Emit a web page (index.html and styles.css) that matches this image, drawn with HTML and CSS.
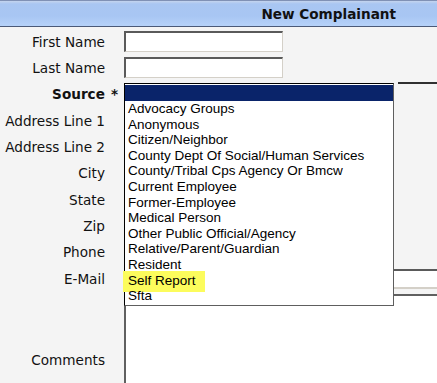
FILE: index.html
```html
<!DOCTYPE html>
<html lang="en">
<head>
    <meta charset="UTF-8">
    <title>New Complainant</title>
    <link rel="stylesheet" href="styles.css">
</head>
<body>
<div class="panel">

    <!-- 标题栏 -->
    <div class="panel-header">New Complainant</div>

    <div class="form">
        <div class="row row-first">
            <label class="label">First Name</label>
            <div class="field"><input type="text" class="text-input"></div>
        </div>
        <div class="row row-first">
            <label class="label">Last Name</label>
            <div class="field"><input type="text" class="text-input"></div>
        </div>

        <!-- 下拉列表 (已展开) -->
        <div class="row row-source">
            <label class="label label-bold">Source<span class="req">*</span></label>
            <div class="field field-source">
                <div class="select-closed"></div>
                <div class="dropdown">
                    <div class="option option-selected"></div>
                    <div class="option">Advocacy Groups</div>
                    <div class="option">Anonymous</div>
                    <div class="option">Citizen/Neighbor</div>
                    <div class="option">County Dept Of Social/Human Services</div>
                    <div class="option">County/Tribal Cps Agency Or Bmcw</div>
                    <div class="option">Current Employee</div>
                    <div class="option">Former-Employee</div>
                    <div class="option">Medical Person</div>
                    <div class="option">Other Public Official/Agency</div>
                    <div class="option">Relative/Parent/Guardian</div>
                    <div class="option">Resident</div>
                    <div class="option"><span class="mark">Self Report</span></div>
                    <div class="option">Sfta</div>
                </div>
            </div>
        </div>

        <div class="row">
            <label class="label">Address Line 1</label>
            <div class="field"><input type="text" class="text-input"></div>
        </div>
        <div class="row">
            <label class="label">Address Line 2</label>
            <div class="field"><input type="text" class="text-input"></div>
        </div>
        <div class="row">
            <label class="label">City</label>
            <div class="field"><input type="text" class="text-input"></div>
        </div>
        <div class="row">
            <label class="label">State</label>
            <div class="field"><input type="text" class="text-input"></div>
        </div>
        <div class="row">
            <label class="label">Zip</label>
            <div class="field"><input type="text" class="text-input"></div>
        </div>
        <div class="row">
            <label class="label">Phone</label>
            <div class="field"><input type="text" class="text-input"></div>
        </div>
        <div class="row">
            <label class="label">E-Mail</label>
            <div class="field"><input type="text" class="text-input text-wide"></div>
        </div>

        <div class="row row-comments">
            <label class="label">Comments</label>
            <div class="field"><textarea class="comments"></textarea></div>
        </div>
    </div>
</div>
</body>
</html>
```

FILE: styles.css
```css
html, body {
    margin: 0;
    padding: 0;
    overflow: hidden;
    background-color: #f4f4f4;
}

.panel {
    width: 437px;
    height: 383px;
    overflow: hidden;
    font-family: "DejaVu Sans", Verdana, sans-serif;
    font-size: 13.6px;
    color: #111;
}

.panel-header {
    height: 25px;
    line-height: 26px;
    padding-right: 41px;
    text-align: right;
    font-weight: bold;
    color: #111;
    border-top: 1px solid #8091b5;
    border-bottom: 1px solid #4b5a78;
    background: linear-gradient(#c4d4ee 0, #a9c6f2 3px, #a8c6f3 60%, #b6d2f9 100%);
}

.form {
    padding-top: 1.5px;
}

.row {
    display: flex;
    align-items: center;
    height: 26.33px;
}

.row-first {
    height: 26px;
}

.row-source {
    height: 27px;
    align-items: flex-start;
}

.label {
    width: 105px;
    flex-shrink: 0;
    text-align: right;
    white-space: nowrap;
}

.row-source .label {
    line-height: 27px;
}

.label-bold {
    font-weight: bold;
}

.req {
    margin-left: 6px;
    margin-right: -13px;
}

.field {
    flex: 1;
    margin-left: 19px;
}

.text-input {
    display: block;
    box-sizing: border-box;
    width: 159px;
    height: 21px;
    margin: 0;
    padding: 0;
    background-color: #fff;
    border-width: 2px 1px 1px 2px;
    border-style: solid;
    border-color: #5a5a5a #d4d0c8 #d4d0c8 #5a5a5a;
}

.text-wide {
    width: 400px;
    height: 20px;
    margin-top: 1px;
    border-bottom-width: 2px;
}

.field-source {
    position: relative;
    align-self: stretch;
}

.select-closed {
    margin-top: 1.5px;
    margin-left: 274px;
    height: 18px;
    border-top: 2px solid #303030;
}

.dropdown {
    position: absolute;
    top: 2.5px;
    left: 0;
    width: 268px;
    padding: 1px 0;
    background-color: #fff;
    border: 1px solid #000;
    border-right-color: #5e5e5e;
    border-bottom-color: #5e5e5e;
    z-index: 10;
    font-family: "Liberation Sans", Arial, sans-serif;
    font-size: 13.5px;
    color: #000;
}

.option {
    height: 15.6px;
    line-height: 15.6px;
    padding-left: 3px;
    white-space: nowrap;
}

.option-selected {
    height: 16px;
    background-color: #0a246a;
}

.mark {
    margin-left: -5px;
    padding: 2px 9px 4px 5px;
    background-color: #fcfc5c;
}

.row-comments {
    height: 132px;
    margin-top: 2.5px;
}

.comments {
    display: block;
    box-sizing: border-box;
    width: 400px;
    height: 132px;
    margin: 0;
    padding: 0;
    resize: none;
    background-color: #fff;
    border-width: 2px 1px 1px 2px;
    border-style: solid;
    border-color: #606060 #d4d0c8 #d4d0c8 #606060;
}
```
